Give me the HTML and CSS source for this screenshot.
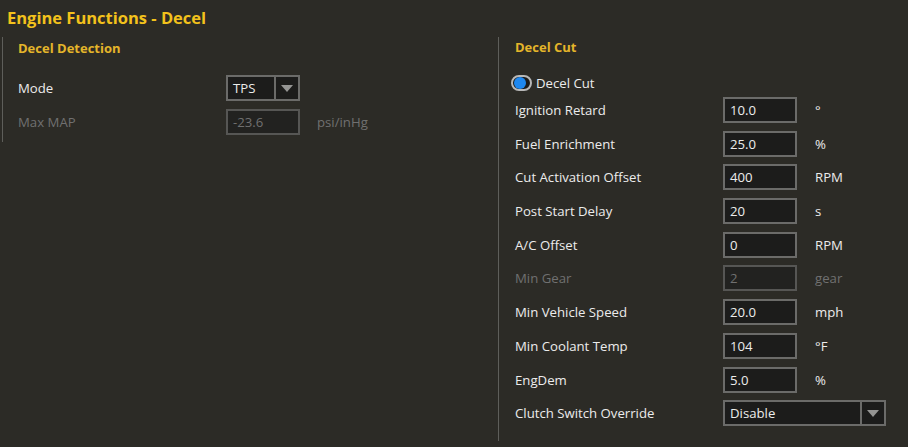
FILE: index.html
```html
<!DOCTYPE html>
<html lang="en">
<head>
  <meta charset="UTF-8">
  <title>Engine Functions - Decel</title>
  <link rel="stylesheet" href="styles.css">
</head>
<body>
  <h1 class="title">Engine Functions - Decel</h1>

  <div class="panels">
    <div class="panel panel-left">
      <h2 class="section">Decel Detection</h2>
      <div class="rows">
        <div class="row">
          <span class="label">Mode</span>
          <div class="select small">
            <span class="value">TPS</span>
            <span class="arrow"></span>
          </div>
        </div>
        <div class="row disabled">
          <span class="label">Max MAP</span>
          <div class="input">-23.6</div>
          <span class="unit">psi/inHg</span>
        </div>
      </div>
    </div>

    <div class="panel panel-right">
      <h2 class="section">Decel Cut</h2>
      <div class="toggle-row">
        <span class="toggle"><span class="knob"></span></span>
        <span class="toggle-label">Decel Cut</span>
      </div>
      <div class="rows">
        <div class="row"><span class="label">Ignition Retard</span><div class="input">10.0</div><span class="unit">°</span></div>
        <div class="row"><span class="label">Fuel Enrichment</span><div class="input">25.0</div><span class="unit">%</span></div>
        <div class="row"><span class="label">Cut Activation Offset</span><div class="input">400</div><span class="unit">RPM</span></div>
        <div class="row"><span class="label">Post Start Delay</span><div class="input">20</div><span class="unit">s</span></div>
        <div class="row"><span class="label">A/C Offset</span><div class="input">0</div><span class="unit">RPM</span></div>
        <div class="row disabled"><span class="label">Min Gear</span><div class="input">2</div><span class="unit">gear</span></div>
        <div class="row"><span class="label">Min Vehicle Speed</span><div class="input">20.0</div><span class="unit">mph</span></div>
        <div class="row"><span class="label">Min Coolant Temp</span><div class="input">104</div><span class="unit">°F</span></div>
        <div class="row"><span class="label">EngDem</span><div class="input">5.0</div><span class="unit">%</span></div>
        <div class="row">
          <span class="label">Clutch Switch Override</span>
          <div class="select wide">
            <span class="value">Disable</span>
            <span class="arrow"></span>
          </div>
        </div>
      </div>
    </div>
  </div>
</body>
</html>
```

FILE: styles.css
```css
body {
  margin: 0;
  background: #2c2b26;
  color: #ececec;
  font-family: 'Open Sans', sans-serif;
  font-size: 13.2px;
}

.title {
  margin: 0;
  height: 37px;
  padding: 6px 7px 0;
  box-sizing: border-box;
  font-size: 16.5px;
  font-weight: 700;
  line-height: 24px;
  color: #f3c21c;
}

.panels {
  display: flex;
  align-items: flex-start;
}

.panel {
  border-left: 1px solid #5e5e5a;
  box-sizing: border-box;
}

.panel-left {
  margin-left: 2px;
  width: 496px;
  padding: 0 0 7px 15px;
}

.panel-right {
  padding: 0 0 15px 16px;
  flex: 1;
}

.section {
  margin: 0;
  height: 22px;
  font-size: 13px;
  font-weight: 700;
  line-height: 22px;
  color: #e4b52a;
}

.panel-left .section {
  margin-bottom: 16px;
}

.panel-right .section {
  height: 20px;
  line-height: 20px;
  margin-bottom: 18px;
}

.rows {
  display: flex;
  flex-direction: column;
  gap: 7.7px;
}

.row {
  display: flex;
  align-items: center;
  height: 26px;
}

.label {
  width: 208px;
  flex-shrink: 0;
}

.input {
  width: 74px;
  height: 26px;
  box-sizing: border-box;
  border: 2px solid #6b6b69;
  background: #1c1c1b;
  padding-left: 5px;
  line-height: 22px;
}

.unit {
  margin-left: 18px;
}

.panel-left .unit {
  margin-left: 17px;
}

.disabled {
  color: #707070;
}

.disabled .input {
  border-color: #565654;
  background: #222220;
}

.select {
  display: flex;
  height: 26px;
  box-sizing: border-box;
  border: 2px solid #6b6b69;
  background: #1c1c1b;
}

.select.small {
  width: 74px;
}

.select.wide {
  width: 163px;
}

.select .value {
  flex: 1;
  padding-left: 5px;
  line-height: 22px;
}

.select .arrow {
  width: 22px;
  border-left: 2px solid #6b6b69;
  position: relative;
}

.select .arrow::after {
  content: '';
  position: absolute;
  left: 5px;
  top: 8px;
  border-left: 6px solid transparent;
  border-right: 6px solid transparent;
  border-top: 7px solid #959593;
}

.toggle-row {
  display: flex;
  align-items: center;
  height: 16px;
  margin-left: -4px;
  margin-bottom: 6px;
}

.toggle {
  width: 21px;
  height: 16px;
  box-sizing: border-box;
  border: 2px solid #b8b8b8;
  border-radius: 8px;
  background: #1c1c1b;
  position: relative;
}

.toggle .knob {
  position: absolute;
  left: 1px;
  top: 0;
  width: 12px;
  height: 12px;
  border-radius: 50%;
  background: #1e88f0;
}

.toggle-label {
  margin-left: 4px;
}
```
